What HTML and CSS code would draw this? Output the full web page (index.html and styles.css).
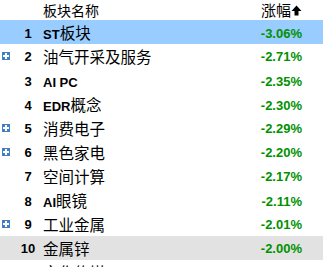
FILE: index.html
```html
<!DOCTYPE html>
<html>
<head>
<meta charset="utf-8">
<link rel="stylesheet" href="styles.css">
</head>
<body>
<div class="board">
  <div class="row head">
    <span class="ico"></span>
    <span class="num"></span>
    <span class="name">板块名称</span>
    <span class="pct hdr">涨幅<svg class="arrow" width="11" height="11" viewBox="0 0 11 11"><path d="M5.5 0.5 L10.5 6 L7.5 6 L7.5 10.5 L3.5 10.5 L3.5 6 L0.5 6 Z" fill="#000"/></svg></span>
  </div>
  <div class="row sel">
    <span class="ico"></span>
    <span class="num">1</span>
    <span class="name"><b class="lat">ST</b>板块</span>
    <span class="pct">-3.06%</span>
  </div>
  <div class="row">
    <span class="ico"><svg width="8" height="8" viewBox="0 0 8 8"><rect x="0" y="0" width="8" height="8" fill="#3f7fc4"/><rect x="1" y="3" width="6" height="2" fill="#fff"/><rect x="3" y="1" width="2" height="6" fill="#fff"/></svg></span>
    <span class="num">2</span>
    <span class="name">油气开采及服务</span>
    <span class="pct">-2.71%</span>
  </div>
  <div class="row">
    <span class="ico"></span>
    <span class="num">3</span>
    <span class="name"><b class="lat">AI PC</b></span>
    <span class="pct">-2.35%</span>
  </div>
  <div class="row">
    <span class="ico"></span>
    <span class="num">4</span>
    <span class="name"><b class="lat">EDR</b>概念</span>
    <span class="pct">-2.30%</span>
  </div>
  <div class="row">
    <span class="ico"><svg width="8" height="8" viewBox="0 0 8 8"><rect x="0" y="0" width="8" height="8" fill="#3f7fc4"/><rect x="1" y="3" width="6" height="2" fill="#fff"/><rect x="3" y="1" width="2" height="6" fill="#fff"/></svg></span>
    <span class="num">5</span>
    <span class="name">消费电子</span>
    <span class="pct">-2.29%</span>
  </div>
  <div class="row">
    <span class="ico"><svg width="8" height="8" viewBox="0 0 8 8"><rect x="0" y="0" width="8" height="8" fill="#3f7fc4"/><rect x="1" y="3" width="6" height="2" fill="#fff"/><rect x="3" y="1" width="2" height="6" fill="#fff"/></svg></span>
    <span class="num">6</span>
    <span class="name">黑色家电</span>
    <span class="pct">-2.20%</span>
  </div>
  <div class="row">
    <span class="ico"></span>
    <span class="num">7</span>
    <span class="name">空间计算</span>
    <span class="pct">-2.17%</span>
  </div>
  <div class="row">
    <span class="ico"></span>
    <span class="num">8</span>
    <span class="name"><b class="lat">AI</b>眼镜</span>
    <span class="pct">-2.11%</span>
  </div>
  <div class="row">
    <span class="ico"><svg width="8" height="8" viewBox="0 0 8 8"><rect x="0" y="0" width="8" height="8" fill="#3f7fc4"/><rect x="1" y="3" width="6" height="2" fill="#fff"/><rect x="3" y="1" width="2" height="6" fill="#fff"/></svg></span>
    <span class="num">9</span>
    <span class="name">工业金属</span>
    <span class="pct">-2.01%</span>
  </div>
  <div class="row hov">
    <span class="ico"></span>
    <span class="num">10</span>
    <span class="name">金属锌</span>
    <span class="pct">-2.00%</span>
  </div>
  <div class="row">
    <span class="ico"></span>
    <span class="num">11</span>
    <span class="name">文化传媒</span>
    <span class="pct">-1.98%</span>
  </div>
</div>
</body>
</html>
```

FILE: styles.css
```css
html, body {
  margin: 0;
  padding: 0;
  background: #fff;
  overflow: hidden;
}
.board {
  width: 323px;
  font-family: "Noto Sans CJK SC", sans-serif;
  color: #000;
}
.row {
  display: grid;
  grid-template-columns: 13px 30px 1fr auto;
  align-items: center;
  height: 24px;
  padding-right: 21px;
}
.row.head {
  height: 20px;
}
.row.sel {
  background: #99ccff;
}
.row.hov {
  background: #e2e2e2;
}
.ico {
  display: flex;
  align-items: center;
  padding-left: 2px;
}
.ico svg {
  display: block;
}
.num {
  text-align: center;
  font-family: "Liberation Sans", sans-serif;
  font-weight: bold;
  font-size: 13px;
}
.name {
  font-size: 15.5px;
  line-height: 24px;
  white-space: nowrap;
}
.head .name {
  font-size: 14px;
  line-height: 20px;
}
.lat {
  font-family: "Liberation Sans", sans-serif;
  font-weight: bold;
  font-size: 13px;
}
.pct {
  font-family: "Liberation Sans", sans-serif;
  font-weight: bold;
  font-size: 13px;
  color: #009100;
  text-align: right;
}
.pct.hdr {
  font-family: "Noto Sans CJK SC", sans-serif;
  font-weight: normal;
  font-size: 15px;
  color: #000;
  display: flex;
  align-items: center;
  line-height: 20px;
}
.arrow {
  display: block;
  margin-left: 0;
}
```
